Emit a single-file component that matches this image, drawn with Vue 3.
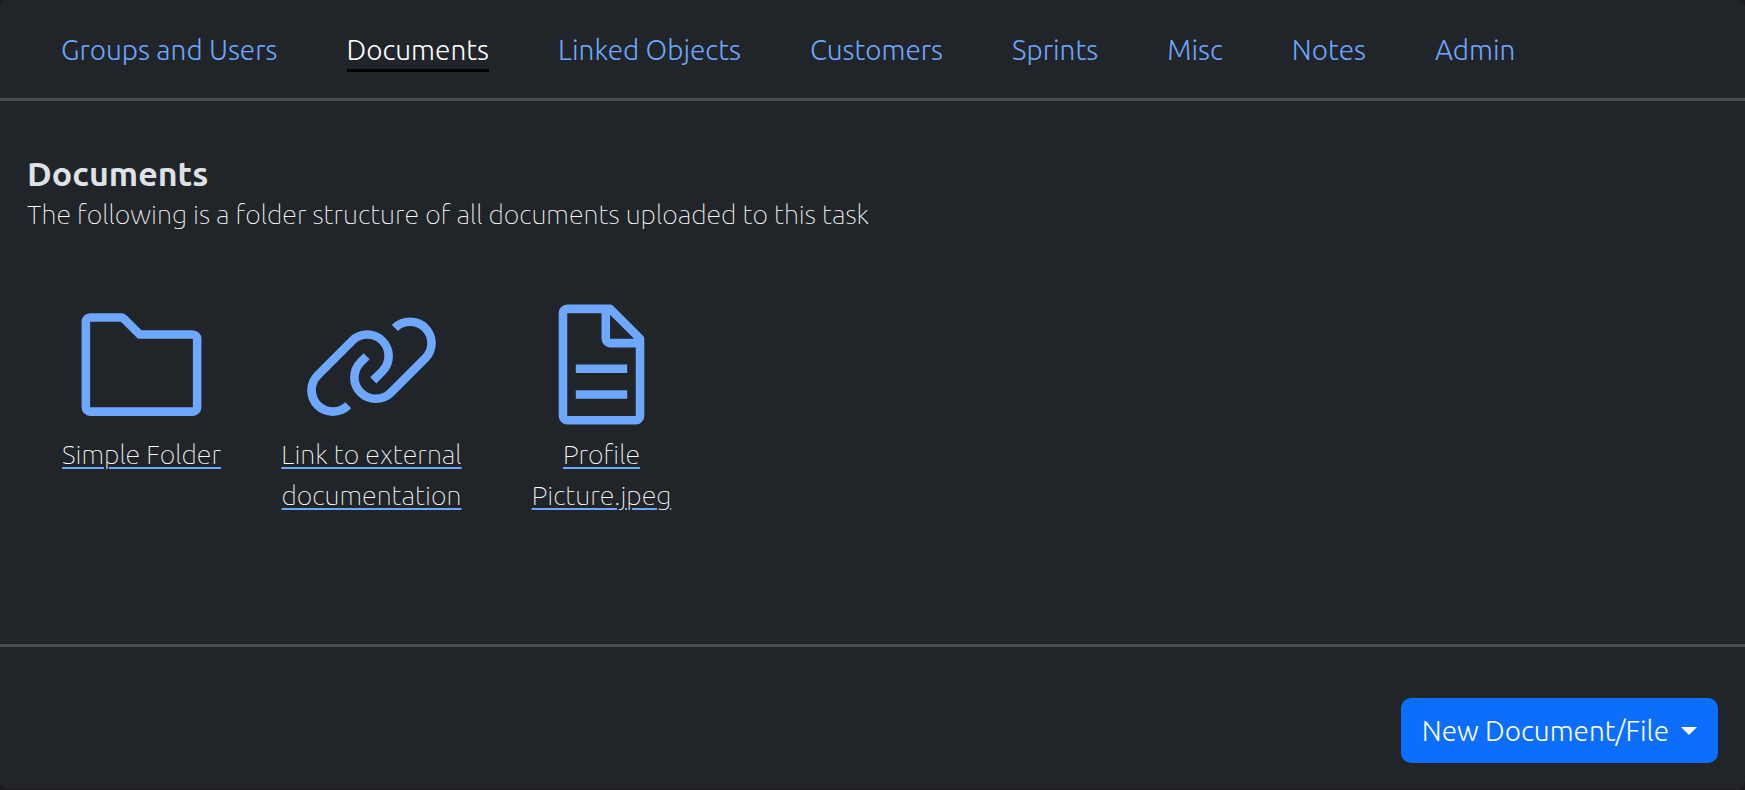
<script setup>
const tabs = ['Groups and Users', 'Documents', 'Linked Objects', 'Customers', 'Sprints', 'Misc', 'Notes', 'Admin']
const active = 'Documents'
const files = [
  {
    name: 'Simple Folder',
    paths: ['M11.17,6l3.42,3.41.58.59H28V26H4V6h7.17m0-2H4A2,2,0,0,0,2,6V26a2,2,0,0,0,2,2H28a2,2,0,0,0,2-2V10a2,2,0,0,0-2-2H16L12.59,4.59A2,2,0,0,0,11.17,4Z'],
  },
  {
    name: 'Link to external documentation',
    paths: [
      'M29.25,6.76a6,6,0,0,0-8.5,0l1.42,1.42a4,4,0,1,1,5.67,5.67l-8,8a4,4,0,1,1-5.67-5.66l1.41-1.42-1.41-1.42-1.42,1.42a6,6,0,0,0,0,8.5A6,6,0,0,0,17,25a6,6,0,0,0,4.27-1.76l8-8A6,6,0,0,0,29.25,6.76Z',
      'M4.19,24.82a4,4,0,0,1,0-5.67l8-8a4,4,0,0,1,5.67,0A3.94,3.94,0,0,1,19,14a4,4,0,0,1-1.17,2.85L15.71,19l1.42,1.42,2.12-2.12a6,6,0,0,0-8.51-8.51l-8,8a6,6,0,0,0,0,8.51A6,6,0,0,0,7,28a6.07,6.07,0,0,0,4.28-1.76L9.86,24.82A4,4,0,0,1,4.19,24.82Z',
    ],
  },
  {
    name: 'Profile Picture.jpeg',
    paths: [
      'M25.7,9.3l-7-7A.91.91,0,0,0,18,2H8A2,2,0,0,0,6,4V28a2,2,0,0,0,2,2H24a2,2,0,0,0,2-2V10A.91.91,0,0,0,25.7,9.3ZM18,4.4,23.6,10H18ZM24,28H8V4h8v6a2,2,0,0,0,2,2h6Z',
      'M10,22h12v2H10ZM10,16h12v2H10Z',
    ],
  },
]
</script>

<template>
  <section class="card">
    <nav class="tabs">
      <a v-for="t in tabs" :key="t" href="#" class="tab" :class="{ active: t === active }">{{ t }}</a>
    </nav>
    <main class="body">
      <h1>Documents</h1>
      <p class="lead">The following is a folder structure of all documents uploaded to this task</p>
      <div class="files">
        <a v-for="f in files" :key="f.name" href="#" class="file">
          <svg viewBox="0 0 32 32" aria-hidden="true"><path v-for="p in f.paths" :key="p" :d="p" /></svg>
          <span>{{ f.name }}</span>
        </a>
      </div>
    </main>
    <footer class="footer">
      <button type="button" class="new">New Document/File<i class="caret"></i></button>
    </footer>
  </section>
</template>

<style>
body {
  background: #1b1a1f;
}
</style>

<style scoped>
.card {
  display: flex;
  flex-direction: column;
  box-sizing: border-box;
  min-height: 100vh;
  border-bottom: 1px solid #1e1a20;
  border-radius: 8px;
  background: #212529;
  color: #dee2e6;
  font-family: Ubuntu, Lato, "Liberation Sans", sans-serif;
  font-size: 28px;
  font-weight: 300;
  line-height: 41px;
}
.tabs {
  display: flex;
  align-items: flex-start;
  gap: 69px;
  padding: 30px 61px 26px;
  border-bottom: 3px solid #464f4d;
}
.tab {
  color: #6ea8fe;
  text-decoration: none;
  white-space: nowrap;
  border-bottom: 3px solid transparent;
  line-height: 39px;
}
.tab.active {
  color: #fff;
  border-bottom-color: #000;
}
.body {
  flex: 1;
  padding: 52px 27px;
}
h1 {
  margin: 0;
  font-size: 34px;
  font-weight: 700;
  line-height: 41px;
}
.lead {
  margin: 0 0 61px;
  color: #fff;
  font-size: 27px;
  font-weight: 100;
}
.files {
  display: flex;
  flex-wrap: wrap;
  column-gap: 1px;
}
.file {
  display: flex;
  flex-direction: column;
  align-items: center;
  box-sizing: border-box;
  width: 229px;
  padding: 0 20px;
  text-align: center;
  color: #fff;
  font-size: 27px;
  font-weight: 100;
  text-decoration: underline 2px #6ea8fe;
  text-underline-offset: 3px;
}
.file svg {
  width: 137px;
  height: 137px;
  margin-bottom: 1px;
  fill: #6ea8fe;
}
.footer {
  display: flex;
  justify-content: flex-end;
  padding: 51px 27px 26px;
  border-top: 3px solid #464f4d;
}
.new {
  display: flex;
  align-items: center;
  gap: 12px;
  padding: 12px 21px;
  border: 0;
  border-radius: 10px;
  background: #0d6efd;
  color: #fff;
  font: inherit;
}
.caret {
  border: 8px solid transparent;
  border-top-color: #fff;
  border-bottom: 0;
}
</style>
